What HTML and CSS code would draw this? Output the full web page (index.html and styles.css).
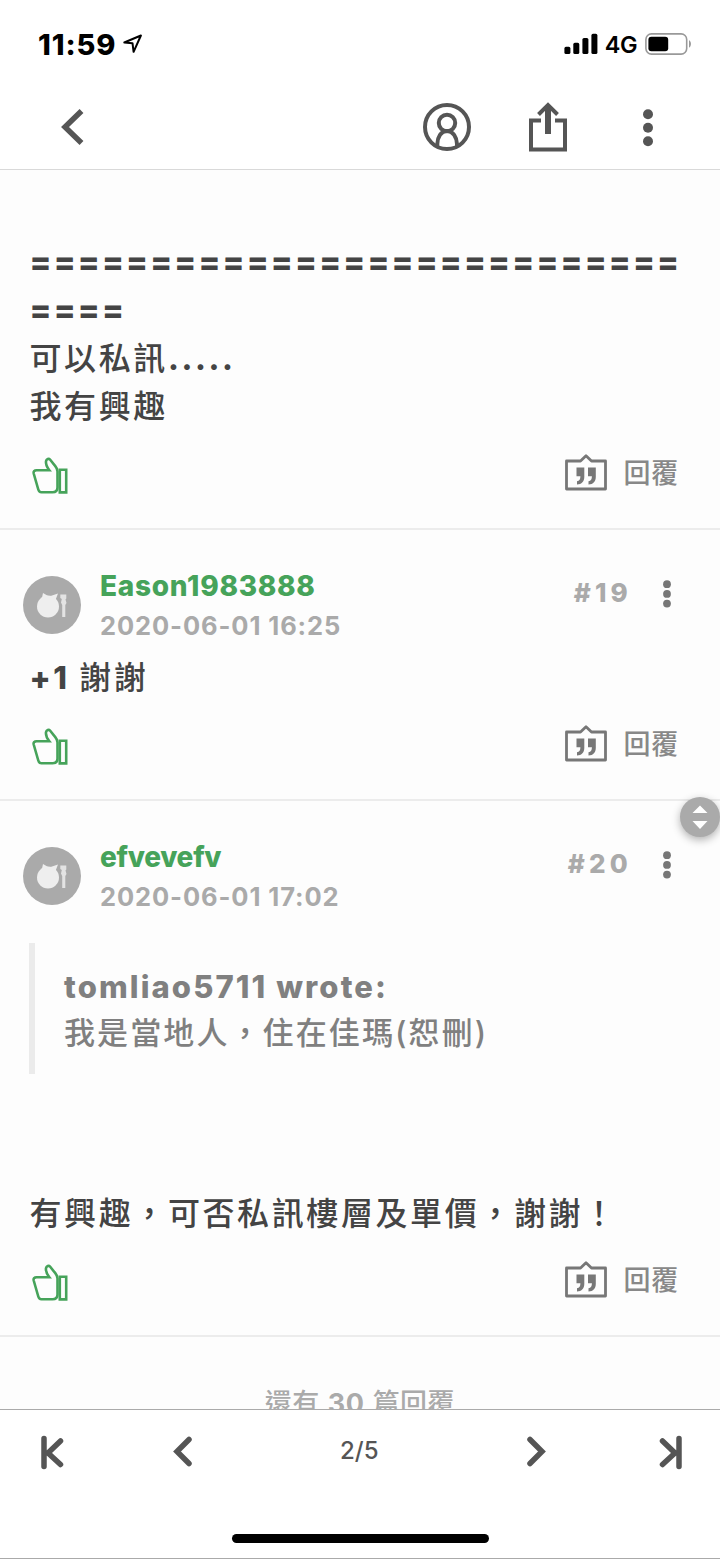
FILE: index.html
```html
<!DOCTYPE html>
<html lang="zh-Hant">
<head>
    <meta charset="UTF-8">
    <meta name="viewport" content="width=device-width, initial-scale=1.0">
    <title>討論區</title>
    <link rel="stylesheet" href="styles.css">
</head>
<body>
    <!-- Shared icons -->
    <svg class="sprite" width="0" height="0">
        <symbol id="thumb" viewBox="0 0 38 40">
            <path d="M18.3 13.2H5.6C3.3 13.2 2.2 14.4 2.7 16.5L7.3 32.5C7.8 34.4 8.6 35.2 10.4 35.2H21.5C24.8 35.2 26.5 33.6 26.5 30.5V14.5C26.5 12 25.7 10.9 24.3 9.2L19.2 2.8C17.8 1.1 15.4 1.8 15 4.2C14.7 6.5 15.1 9.2 18.3 13.2Z"/>
            <path d="M28.8 12.8H35.2V35.4H28.8Z"/>
        </symbol>
        <symbol id="quote" viewBox="0 0 42 37">
            <path class="line" d="M1.5 7H15.5L21 1.7L26.5 7H40.5V35H1.5Z"/>
            <path class="fill" d="M11.5 13.5H19.3V23C19.3 27.5 16.8 30.3 12 30.5V27.2C14.5 26.8 15.4 25.6 15.4 22.3H11.5ZM23 13.5H30.8V23C30.8 27.5 28.3 30.3 23.5 30.5V27.2C26 26.8 26.9 25.6 26.9 22.3H23Z"/>
        </symbol>
        <symbol id="dots" viewBox="0 0 10 28">
            <circle cx="5" cy="4.2" r="3.9"/><circle cx="5" cy="13.9" r="3.9"/><circle cx="5" cy="23.6" r="3.9"/>
        </symbol>
        <symbol id="avatar" viewBox="0 0 58 58">
            <circle cx="29" cy="29" r="29" fill="#aaa"/>
            <circle cx="25" cy="30.5" r="11" fill="#eee"/>
            <path fill="#eee" d="M18.5 24L20 17L26 20.5L35 17.5L32.5 24Z"/>
            <path fill="#e3e3e3" d="M37.3 18.5H43.3V22.5L42.5 23.5L43.5 27L42.3 29V41H39.2V29L38 26.5L38.8 23L37.3 22Z"/>
        </symbol>
    </svg>

    <header class="top">
        <div class="status">
            <span class="time">11:59</span>
            <svg class="location" width="20" height="20" viewBox="0 0 20 20"><path d="M1.3 8.5L17.9 1.5L10.6 17.8L9.5 9.2Z"/></svg>
            <div class="status-right">
                <svg width="34" height="22" viewBox="0 0 34 22"><rect x="0.4" y="13.8" width="6" height="7.2" rx="1.6"/><rect x="9.3" y="9.8" width="6" height="11.2" rx="1.6"/><rect x="18.4" y="5" width="6" height="16" rx="1.6"/><rect x="27.4" y="0.8" width="6" height="20.2" rx="1.6"/></svg>
                <span class="network">4G</span>
                <svg width="47" height="22" viewBox="0 0 47 22"><rect x="0.9" y="0.9" width="40.8" height="20.2" rx="5.6" fill="none" stroke="#999" stroke-width="1.6"/><rect x="3.4" y="3.7" width="19.8" height="14.6" rx="3"/><path d="M44 7.3C46.6 8.4 46.6 13.6 44 14.7Z" fill="#999"/></svg>
            </div>
        </div>
        <nav class="nav">
            <svg class="back" width="24" height="38" viewBox="0 0 24 38"><path d="M20.5 3L4 19L20.5 35"/></svg>
            <svg class="user" width="48" height="48" viewBox="0 0 48 48"><circle cx="24" cy="24" r="22"/><circle cx="24" cy="20" r="8.2"/><path d="M14.3 43V41C14.5 34 18 28 24 28C30 28 33.7 34 34 41V43"/></svg>
            <svg class="share" width="38" height="51" viewBox="0 0 38 51"><path d="M12 19.5H2V48.5H36V19.5H26"/><path class="shaft" d="M19 5V33"/><path d="M9.5 13.5L19 4L28.5 13.5"/></svg>
            <svg class="more" width="10" height="38" viewBox="0 0 10 38"><circle cx="5" cy="5.2" r="5"/><circle cx="5" cy="18.8" r="5"/><circle cx="5" cy="32.2" r="5"/></svg>
        </nav>
    </header>

    <main class="thread">
        <article class="post first">
            <div class="text">
                <p class="rule">===========================<br>====</p>
                <p>可以私訊<span class="ascii">.....</span></p>
                <p>我有興趣</p>
            </div>
            <div class="actions">
                <svg class="thumb"><use href="#thumb"/></svg>
                <svg class="quote-icon"><use href="#quote"/></svg>
                <span class="reply">回覆</span>
            </div>
        </article>

        <article class="post">
            <div class="post-head">
                <svg class="avatar"><use href="#avatar"/></svg>
                <div class="meta">
                    <div class="name">Eason1983888</div>
                    <div class="date">2020-06-01 16:25</div>
                </div>
                <span class="number">#19</span>
                <svg class="dots"><use href="#dots"/></svg>
            </div>
            <div class="text">
                <p><span class="ascii">+1 </span>謝謝</p>
            </div>
            <div class="actions">
                <svg class="thumb"><use href="#thumb"/></svg>
                <svg class="quote-icon"><use href="#quote"/></svg>
                <span class="reply">回覆</span>
            </div>
        </article>

        <article class="post">
            <div class="post-head">
                <svg class="avatar"><use href="#avatar"/></svg>
                <div class="meta">
                    <div class="name short">efvevefv</div>
                    <div class="date">2020-06-01 17:02</div>
                </div>
                <span class="number">#20</span>
                <svg class="dots"><use href="#dots"/></svg>
            </div>
            <blockquote>
                <p class="wrote">tomliao5711 wrote:</p>
                <p>我是當地人，住在佳瑪(恕刪)</p>
            </blockquote>
            <div class="text">
                <p>有興趣，可否私訊樓層及單價，謝謝！</p>
            </div>
            <div class="actions">
                <svg class="thumb"><use href="#thumb"/></svg>
                <svg class="quote-icon"><use href="#quote"/></svg>
                <span class="reply">回覆</span>
            </div>
        </article>

        <div class="remaining">還有 <b>30</b> 篇回覆</div>

        <div class="scroller">
            <svg width="40" height="40" viewBox="0 0 40 40"><path d="M12.5 16L20 8.5L27.5 16ZM12.5 24H27.5L20 32Z"/></svg>
        </div>
    </main>

    <footer class="pager">
        <div class="pager-row">
            <svg width="24" height="36" viewBox="0 0 24 36"><path d="M4 3.5V31.5M20.5 6L8 18L20.5 29.5"/></svg>
            <svg class="prev" width="20" height="36" viewBox="0 0 20 36"><path d="M16 4.5L4 16.5L16 28.5"/></svg>
            <span>2/5</span>
            <svg class="next" width="20" height="36" viewBox="0 0 20 36"><path d="M4 4.5L16 16.5L4 28.5"/></svg>
            <svg width="24" height="36" viewBox="0 0 24 36"><path d="M20 3.5V31.5M3.5 6L16 18L3.5 29.5"/></svg>
        </div>
        <div class="home-bar"></div>
    </footer>
</body>
</html>
```
FILE: styles.css
```css
* {
    box-sizing: border-box;
}
body {
    margin: 0;
    width: 720px;
    height: 1559px;
    overflow: hidden;
    display: flex;
    flex-direction: column;
    background: #fdfdfd;
    color: #444;
    font-family: Inter, "Noto Sans CJK TC", sans-serif;
}
p, blockquote {
    margin: 0;
}
svg {
    display: block;
    flex-shrink: 0;
}
.sprite {
    position: absolute;
}

/* Top bar */
.top {
    height: 170px;
    background: #fff;
    border-bottom: 1px solid #d9d9d9;
}
.status {
    height: 88px;
    padding: 0 28px 0 38px;
    display: flex;
    align-items: center;
    color: #000;
}
.time {
    font-size: 29px;
    font-weight: 800;
    letter-spacing: 0.9px;
}
.location {
    margin-left: 7px;
    fill: none;
    stroke: #000;
    stroke-width: 2;
    stroke-linejoin: round;
}
.status-right {
    margin-left: auto;
    display: flex;
    align-items: center;
}
.network {
    margin: 1px 8px 0 7px;
    font-size: 23.5px;
    font-weight: 600;
    letter-spacing: -0.5px;
}
.nav {
    height: 77px;
    padding: 0 67px 0 61px;
    display: flex;
    align-items: center;
}
.nav svg {
    fill: none;
    stroke: #555;
    stroke-width: 4;
}
.nav .back {
    margin-right: auto;
    margin-top: 1px;
    stroke-width: 5.5;
}
.share {
    margin: 0 76px 0 58px;
}
.nav .shaft {
    stroke-width: 6;
}
.nav .more {
    margin-top: 2px;
    fill: #555;
    stroke: none;
}

/* Posts */
.thread {
    position: relative;
    height: 1239px;
    overflow: hidden;
}
.post {
    border-bottom: 2px solid #ececec;
}
.first {
    padding-top: 68px;
}
.post-head {
    height: 124px;
    padding: 37px 48px 0 23px;
    display: flex;
    align-items: flex-start;
}
.avatar {
    width: 58px;
    height: 58px;
    margin-top: 9px;
}
.meta {
    flex: 1;
    margin-left: 19px;
    font-weight: 700;
    white-space: nowrap;
}
.name {
    height: 39px;
    line-height: 38px;
    font-size: 28px;
    font-weight: 800;
    letter-spacing: 0.7px;
    color: #46a35a;
}
.short {
    letter-spacing: -0.3px;
}
.date {
    line-height: 40px;
    font-size: 25.5px;
    letter-spacing: 0.9px;
    color: #aaa;
}
.number {
    margin-right: 30px;
    line-height: 52px;
    font-size: 26px;
    font-weight: 800;
    letter-spacing: 4.2px;
    color: #aaa;
}
.dots {
    width: 10px;
    height: 28px;
    margin-top: 13px;
    fill: #777;
}
.text {
    padding-left: 29.5px;
    font-size: 32px;
    font-weight: 500;
    line-height: 48px;
    letter-spacing: 2.6px;
    white-space: nowrap;
}
.rule {
    margin-bottom: 1px;
    font-size: 32px;
    font-weight: 800;
    letter-spacing: 2.2px;
}
.ascii {
    font-size: 31px;
    font-weight: 800;
}
.actions {
    height: 97px;
    padding: 23px 41px 0 31px;
    display: flex;
    align-items: flex-start;
    color: #888;
    font-size: 27px;
    font-weight: 500;
    line-height: 40px;
}
.thumb {
    width: 38px;
    height: 40px;
    margin: 3px auto 0 0;
    fill: none;
    stroke: #46a35a;
    stroke-width: 2.6;
}
.quote-icon {
    width: 42px;
    height: 37px;
    margin-right: 17px;
}
.reply {
    letter-spacing: 0.7px;
}
.line {
    fill: none;
    stroke: #777;
    stroke-width: 2.8;
    stroke-linejoin: round;
}
.fill {
    fill: #777;
}
blockquote {
    height: 131px;
    margin: 18px 29px 116px;
    padding: 21px 0 0 29px;
    border-left: 6px solid #ebebeb;
    color: #808080;
    font-size: 31px;
    font-weight: 500;
    line-height: 46px;
    letter-spacing: 2.1px;
}
.wrote {
    font-size: 31px;
    font-weight: 800;
    letter-spacing: 2.1px;
}
.remaining {
    padding-top: 47px;
    text-align: center;
    font-size: 27px;
    font-weight: 500;
    line-height: 40px;
    letter-spacing: 0.6px;
    color: #aaa;
}
.scroller {
    position: absolute;
    top: 627px;
    right: 0;
    border-radius: 50%;
    background: #aaa;
    box-shadow: 0 3px 8px rgba(0, 0, 0, 0.3);
}
.scroller svg {
    fill: #fff;
}

/* Bottom pager */
.pager {
    height: 150px;
    border-top: 1px solid #aaa;
    border-bottom: 1px solid #aaa;
    background: #fff;
}
.pager-row {
    height: 124px;
    padding: 25px 37px 0 40px;
    display: flex;
    line-height: 31px;
    font-size: 24px;
    font-weight: 500;
    color: #555;
}
.pager-row svg {
    fill: none;
    stroke: #555;
    stroke-width: 5.5;
    stroke-linecap: round;
}
.pager-row .prev {
    margin: 0 147px 0 109px;
}
.pager-row .next {
    margin: 0 113px 0 auto;
}
.home-bar {
    width: 257px;
    height: 9px;
    margin: 0 auto;
    border-radius: 5px;
    background: #000;
}
```
